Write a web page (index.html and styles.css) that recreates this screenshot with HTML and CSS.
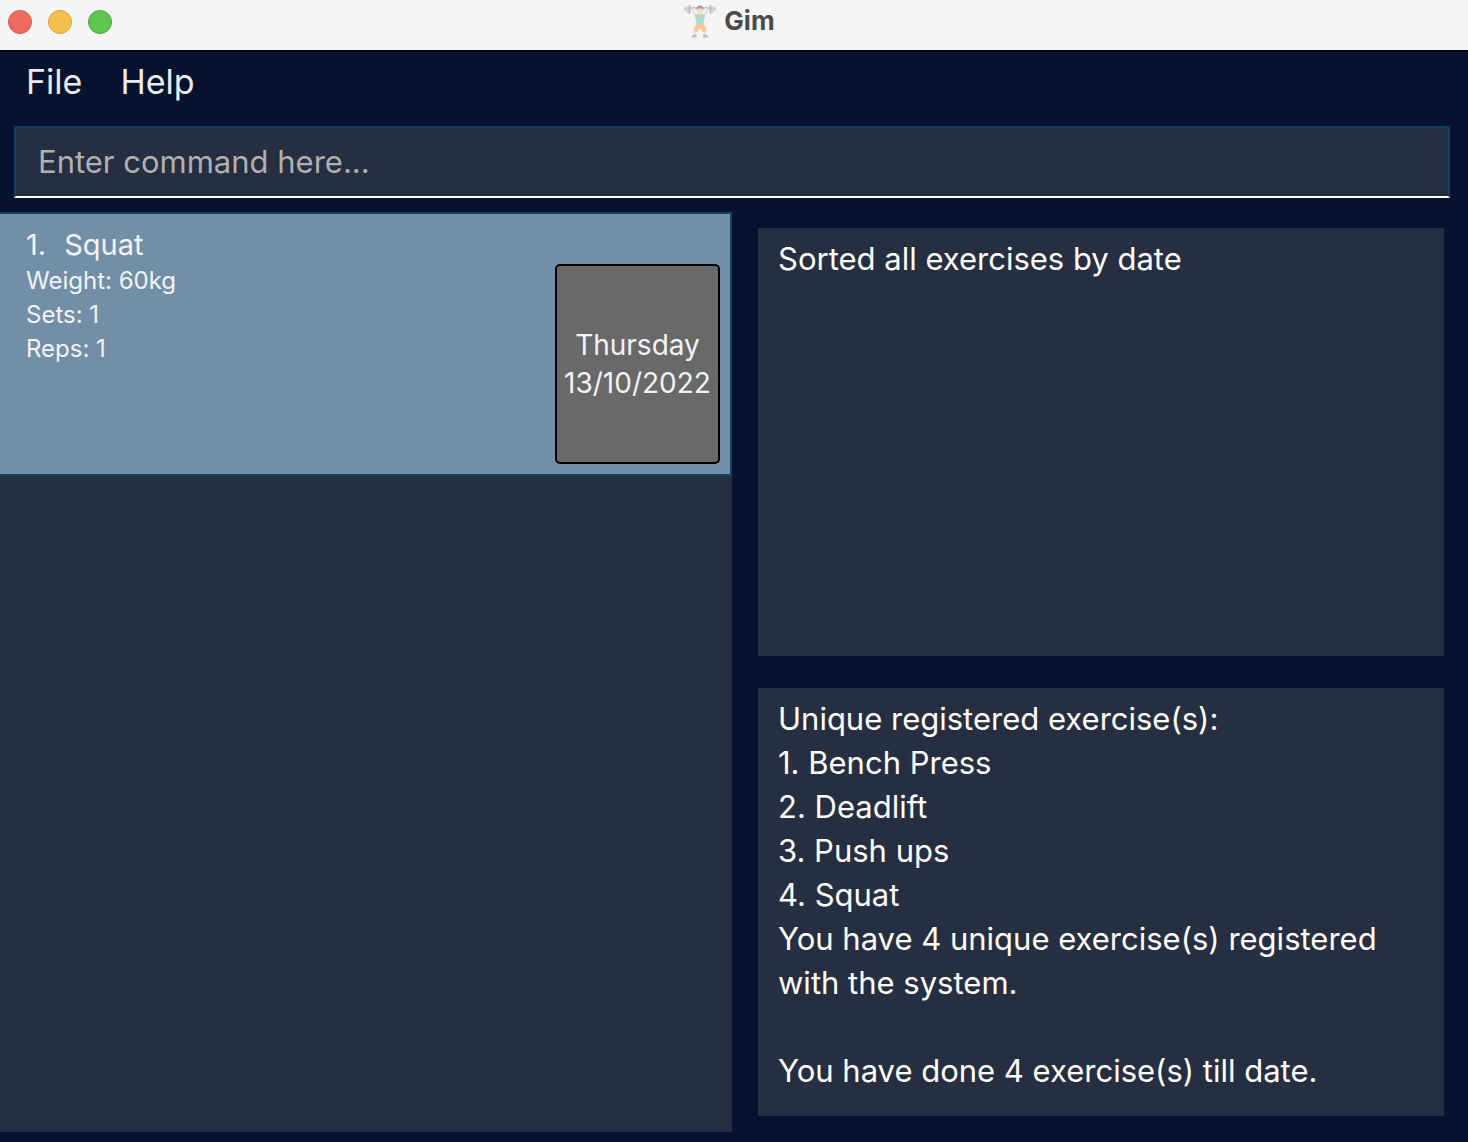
FILE: index.html
```html
<!DOCTYPE html>
<html lang="en">
<head>
<meta charset="utf-8">
<meta name="viewport" content="width=device-width, initial-scale=1">
<title>Gim</title>
<link rel="stylesheet" href="styles.css">
</head>
<body>
<header class="titlebar">
  <div class="window-controls">
    <button class="control control-close" type="button" aria-label="Close"></button>
    <button class="control control-minimise" type="button" aria-label="Minimise"></button>
    <button class="control control-zoom" type="button" aria-label="Zoom"></button>
  </div>
  <h1 class="title">
    <svg class="logo" viewBox="0 0 34 34" aria-hidden="true">
      <path d="M1 5Q17 2.500 33 5" fill="none" stroke="#b9bdbf" stroke-width="1.500"/>
      <path d="M2 3v4M4.500 2v7M29.500 2v7M32 3v4" stroke="#d0d3d4" stroke-width="2"/>
      <path d="M6.500 1v9M27.500 1v9" stroke="#b9bcbe" stroke-width="2"/>
      <path d="M10 5L11 9L14 12M24 5L23 9L20 12" fill="none" stroke="#f3dac8" stroke-width="2.400" stroke-linecap="round" stroke-linejoin="round"/>
      <path d="M12.500 25L11.500 31M21.500 25L22 31" stroke="#f3dfd1" stroke-width="2.500"/>
      <path d="M11.500 11.500Q17 8 22.500 11.500L21 16L20.500 22H13.500L13 16Z" fill="#a9dccb"/>
      <path d="M13 20H21L24 27L19.500 28L17 24L14.500 28L10 27Z" fill="#f8c69c"/>
      <ellipse cx="17" cy="7" rx="3" ry="4" fill="#f3dac8"/>
      <path d="M13.500 6Q13 1.500 17 1.500T20.500 6L19 4.500H15Z" fill="#a39f9c"/>
      <path d="M8.500 33.500Q8.500 30.500 13.500 30.500V33.500ZM20 30.500Q25 30.500 25.500 33.500H20Z" fill="#a9bfe2"/>
    </svg>
    <span>Gim</span>
  </h1>
</header>

<nav class="menubar" aria-label="Application menu">
  <button class="menu" type="button">File</button>
  <button class="menu" type="button">Help</button>
</nav>

<form class="command">
  <input class="command-input" type="text" aria-label="Command" placeholder="Enter command here...">
</form>

<main class="content">
  <ul class="exercises">
    <li class="exercise">
      <div class="details">
        <h2 class="name"><span>1.</span><span>Squat</span></h2>
        <p class="stat">Weight: 60kg</p>
        <p class="stat">Sets: 1</p>
        <p class="stat">Reps: 1</p>
      </div>
      <div class="date"><span>Thursday</span><span>13/10/2022</span></div>
    </li>
  </ul>
  <section class="results">
    <textarea class="result" readonly aria-label="Command result">Sorted all exercises by date</textarea>
    <textarea class="result" readonly aria-label="Registered exercises">Unique registered exercise(s):
1. Bench Press
2. Deadlift
3. Push ups
4. Squat
You have 4 unique exercise(s) registered with the system.

You have done 4 exercise(s) till date.</textarea>
  </section>
</main>
</body>
</html>
```
FILE: styles.css
```css
* {
  box-sizing: border-box;
}

body {
  display: flex;
  flex-direction: column;
  min-height: 100vh;
  margin: 0;
  background: #06122e;
  color: #f1f3f6;
  font-family: Inter, "Liberation Sans", sans-serif;
}

button,
input,
textarea {
  font-family: inherit;
}

h1,
h2,
p,
ul {
  margin: 0;
  padding: 0;
}

.titlebar {
  display: grid;
  grid-template-columns: 1fr auto 1fr;
  align-items: center;
  height: 52px;
  padding: 0 18px 8px 8px;
  border-bottom: 2px solid #01030f;
  background: #f5f5f5;
}

.window-controls {
  display: flex;
  gap: 16px;
  padding-top: 2px;
}

.control {
  width: 24px;
  height: 24px;
  padding: 0;
  border: 1px solid;
  border-radius: 50%;
}

.control-close {
  border-color: #d9574d;
  background: #ec6a5e;
}

.control-minimise {
  border-color: #d9a03c;
  background: #f4bf4f;
}

.control-zoom {
  border-color: #4fa73e;
  background: #61c554;
}

.title {
  display: flex;
  align-items: center;
  gap: 7px;
  color: #4b4b4b;
  font-size: 26px;
  font-weight: 700;
  line-height: 32px;
}

.logo {
  width: 34px;
  height: 34px;
}

.menubar {
  display: flex;
  gap: 38px;
  padding: 8px 26px 22px;
}

.menu {
  padding: 0;
  border: 0;
  background: none;
  color: #e9ebee;
  font-size: 34px;
  line-height: 44px;
}

.command {
  padding: 0 18px 14px 14px;
}

.command-input {
  display: block;
  width: 100%;
  height: 72px;
  padding: 0 22px 2px;
  border: 2px solid #0f4163;
  border-bottom-color: #fff;
  border-radius: 0;
  outline: 0;
  background: #262e41;
  color: #fff;
  font-size: 31px;
}

.command-input::placeholder {
  color: #b0b0b0;
}

.content {
  display: flex;
  flex: 1;
  padding-bottom: 10px;
}

.exercises {
  flex: 0 0 calc(50% - 2px);
  background: #262e41;
  list-style: none;
}

.exercise {
  display: flex;
  justify-content: space-between;
  align-items: flex-end;
  min-height: 264px;
  padding: 10px;
  border: 2px solid #0f4163;
  border-left: 0;
  background: #738fa7;
}

.details {
  align-self: stretch;
  padding: 2px 0 0 16px;
}

.name {
  display: flex;
  gap: 18px;
  font-size: 29px;
  font-weight: 400;
  line-height: 38px;
}

.stat {
  font-size: 24px;
  line-height: 34px;
}

.date {
  display: flex;
  flex-direction: column;
  align-items: center;
  justify-content: center;
  min-width: 165px;
  height: 200px;
  border: 2px solid #000;
  border-radius: 5px;
  background: #696969;
  font-size: 28px;
  line-height: 38px;
}

.results {
  display: flex;
  flex: 1;
  flex-direction: column;
  gap: 32px;
  padding: 16px 24px 16px 26px;
}

.result {
  flex: 1;
  width: 100%;
  min-height: 0;
  padding: 9px 20px;
  border: 0;
  outline: 0;
  background: #262e41;
  color: #fff;
  font-size: 31px;
  line-height: 44px;
  resize: none;
}
```
